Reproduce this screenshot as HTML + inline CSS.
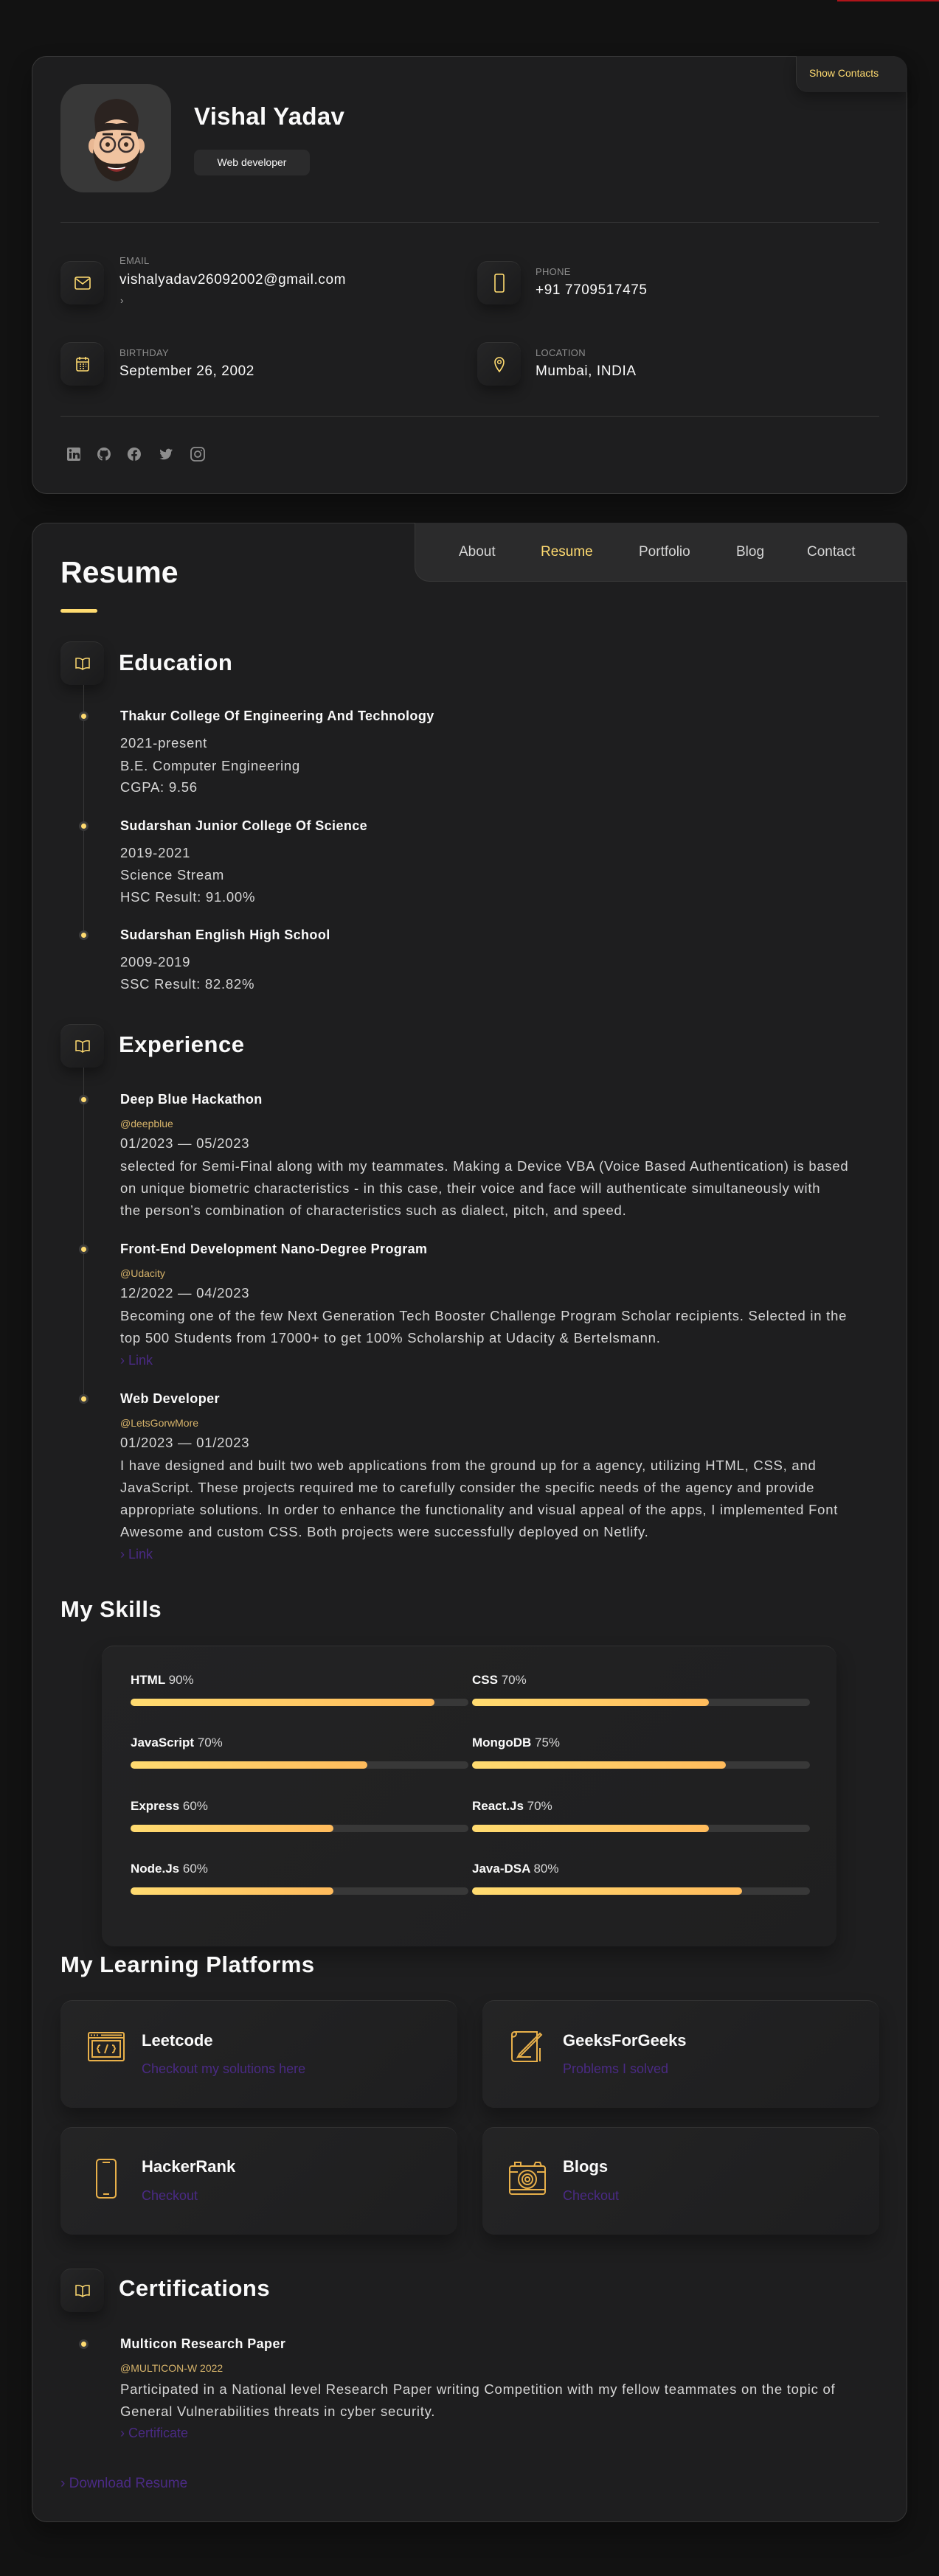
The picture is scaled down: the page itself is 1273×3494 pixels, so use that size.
<!DOCTYPE html>
<html><head><meta charset="utf-8">
<style>
*{margin:0;padding:0;box-sizing:border-box}
body{width:1273px;height:3494px;background:#121212;font-family:"Liberation Sans",sans-serif;color:#fafafa;position:relative;overflow:hidden}
.a{position:absolute;white-space:nowrap}
.card{position:absolute;left:43px;width:1187px;background:#1e1e1f;border:1px solid #383838;border-radius:20px;box-shadow:0 16px 30px rgba(0,0,0,.35)}
.ibox{position:absolute;width:59px;height:59px;border-radius:14px;background:linear-gradient(135deg,#262627,#1a1a1b);box-shadow:0 8px 16px rgba(0,0,0,.35);border-top:1px solid #333;display:flex;align-items:center;justify-content:center}
.lbl{font-size:13px;color:#8d8d8d;letter-spacing:.3px}
.val{font-size:19px;color:#fafafa;letter-spacing:.6px}
.sep{position:absolute;left:82px;width:1110px;height:1px;background:#383838}
.h2{font-size:31px;font-weight:bold;letter-spacing:.5px}
.dot{position:absolute;left:107px;width:13px;height:13px;border-radius:50%;background:#3a3a3b}
.dot:after{content:"";position:absolute;left:3px;top:3px;width:7px;height:7px;border-radius:50%;background:#ffdb70}
.vline{position:absolute;left:113px;width:1px;background:#383838}
.t{font-size:18px;font-weight:bold;letter-spacing:.4px}
.y{color:#e0bb6c}
.p{font-size:18.5px;color:#d6d6d6;line-height:30px;letter-spacing:.75px}
.sm{font-size:14px;color:#d6b36a}
.lnk{font-size:18px;color:#4a2a84}
.sk{font-size:17px;font-weight:bold}
.sk span{font-weight:normal;color:#d6d6d6}
.track{position:absolute;height:10px;border-radius:5px;background:#383838;width:458px}
.fill{height:10px;border-radius:5px;background:linear-gradient(90deg,#ffdb70,#ffbb5c)}
.pc{position:absolute;width:538px;height:146px;border-radius:16px;background:linear-gradient(135deg,#242425,#1e1e1f);border-top:1px solid #333;box-shadow:0 14px 24px rgba(0,0,0,.3)}
.pt{font-size:22px;font-weight:bold}
.ps{font-size:18px;color:#4a2a84}
</style></head><body>
<div class="a" style="left:1135px;top:0;width:138px;height:2px;background:#b0141a"></div>

<!-- CARD 1 -->
<div class="card" style="top:76px;height:594px"></div>
<div class="a" style="left:1079px;top:76px;width:151px;height:49px;background:#232324;border-radius:0 20px 0 16px;border-left:1px solid #333;box-shadow:0 8px 16px rgba(0,0,0,.3)"></div>
<div class="a" style="left:1097px;top:91px;font-size:14px;color:#ffdb70">Show Contacts</div>

<div class="a" style="left:82px;top:114px;width:150px;height:147px;border-radius:32px;background:#383838;overflow:hidden">
<svg width="150" height="147" viewBox="0 0 150 147">
<path d="M46 48 Q48 22 76 20 Q104 22 106 50 L104 70 L48 70Z" fill="#2b2320"/>
<ellipse cx="44" cy="84" rx="6" ry="10" fill="#e9b894"/><ellipse cx="108" cy="84" rx="6" ry="10" fill="#e9b894"/>
<ellipse cx="76" cy="86" rx="31" ry="38" fill="#f0c3a0"/>
<path d="M44 88 Q46 128 76 132 Q106 128 108 88 Q100 110 76 108 Q52 110 44 88Z" fill="#2a211c"/>
<path d="M62 112 Q76 126 90 112 Q76 116 62 112Z" fill="#8a2b2b"/>
<path d="M64 112 Q76 116 88 112 L87 114 Q76 117 65 114Z" fill="#fff"/>
<path d="M48 60 Q56 50 76 54 Q96 50 104 60 L104 66 Q76 58 48 66Z" fill="#2b2320"/>
<circle cx="64" cy="82" r="10" fill="none" stroke="#3a3030" stroke-width="2.5"/><circle cx="89" cy="82" r="10" fill="none" stroke="#3a3030" stroke-width="2.5"/>
<circle cx="64" cy="82" r="3" fill="#3a2a20"/><circle cx="89" cy="82" r="3" fill="#3a2a20"/>
<path d="M57 68 L71 68 M82 68 L96 68" stroke="#2b2320" stroke-width="3"/>
</svg></div>
<div class="a" style="left:263px;top:139px;font-size:33px;font-weight:bold;letter-spacing:.3px">Vishal Yadav</div>
<div class="a" style="left:263px;top:203px;width:157px;height:35px;border-radius:8px;background:#2b2b2c;font-size:14px;line-height:35px;text-align:center">Web developer</div>
<div class="sep" style="top:301px"></div>

<div class="ibox" style="left:82px;top:354px"><svg width="22" height="18" viewBox="0 0 22 18"><rect x="1" y="1" width="20" height="16" rx="2" fill="none" stroke="#ffdb70" stroke-width="1.6"/><path d="M2 3 L11 10 L20 3" fill="none" stroke="#ffdb70" stroke-width="1.6"/></svg></div>
<div class="a lbl" style="left:162px;top:346px">EMAIL</div>
<div class="a val" style="left:162px;top:369px">vishalyadav26092002@gmail.com</div>
<div class="a" style="left:163px;top:400px;font-size:13px;color:#aaa">›</div>

<div class="ibox" style="left:647px;top:354px"><svg width="16" height="26" viewBox="0 0 16 26"><rect x="2" y="1" width="12" height="24" rx="2" fill="none" stroke="#ffdb70" stroke-width="1.6"/></svg></div>
<div class="a lbl" style="left:726px;top:361px">PHONE</div>
<div class="a val" style="left:726px;top:383px">+91 7709517475</div>

<div class="ibox" style="left:82px;top:464px"><svg width="20" height="22" viewBox="0 0 20 22"><rect x="2" y="3" width="16" height="17" rx="2" fill="none" stroke="#ffdb70" stroke-width="1.6"/><path d="M2 8H18M6 1V5M14 1V5M6 11h2M10 11h2M14 11h1M6 14h2M10 14h2M14 14h1M6 17h2M10 17h2" stroke="#ffdb70" stroke-width="1.5"/></svg></div>
<div class="a lbl" style="left:162px;top:471px">BIRTHDAY</div>
<div class="a val" style="left:162px;top:493px">September 26, 2002</div>

<div class="ibox" style="left:647px;top:464px"><svg width="16" height="22" viewBox="0 0 16 22"><path d="M8 21 C3 14 2 11 2 8 A6 6 0 0 1 14 8 C14 11 13 14 8 21Z" fill="none" stroke="#ffdb70" stroke-width="1.6"/><circle cx="8" cy="8" r="2.3" fill="none" stroke="#ffdb70" stroke-width="1.5"/></svg></div>
<div class="a lbl" style="left:726px;top:471px">LOCATION</div>
<div class="a val" style="left:726px;top:493px">Mumbai, INDIA</div>
<div class="sep" style="top:564px"></div>

<svg class="a" style="left:91px;top:606px" width="190" height="22" viewBox="0 0 190 22" fill="#8d8d8d">
<rect x="0" y="1" width="18" height="18" rx="2"/><rect x="3" y="8" width="3" height="8" fill="#1e1e1f"/><circle cx="4.5" cy="5" r="1.7" fill="#1e1e1f"/><path d="M8 8h3v1.5c1-2 6-2 6 2V16h-3v-4c0-2-3-2-3 0v4H8z" fill="#1e1e1f"/>
<path d="M50 1a9 9 0 0 0-3 17.5c.5 0 .6-.2.6-.5v-2c-2.5.5-3-1-3-1-.4-1-1-1.3-1-1.3-.8-.6 0-.6 0-.6 1 0 1.4 1 1.4 1 .8 1.4 2.2 1 2.7.8 0-.6.3-1 .6-1.2-2-.2-4-1-4-4.4 0-1 .3-1.8.9-2.4 0-.3-.4-1.1.1-2.3 0 0 .8-.2 2.5.9a8 8 0 0 1 4.4 0c1.7-1.1 2.5-.9 2.5-.9.5 1.2.2 2 .1 2.3.6.6.9 1.4.9 2.4 0 3.4-2 4.2-4 4.4.3.3.6.8.6 1.6V18c0 .3.2.5.6.5A9 9 0 0 0 50 1z"/>
<path d="M91 1a9 9 0 0 0-1.5 17.9V12.6h-2.3V10h2.3V8c0-2.3 1.4-3.5 3.4-3.5 1 0 2 .2 2 .2v2.2h-1.1c-1.1 0-1.5.7-1.5 1.4V10h2.5l-.4 2.6h-2.1v6.3A9 9 0 0 0 91 1z"/>
<path d="M143 4.5c-.7.3-1.4.5-2.1.6.8-.5 1.3-1.2 1.6-2-.7.4-1.5.7-2.3.9a3.6 3.6 0 0 0-6.2 3.3c-3-.2-5.7-1.6-7.5-3.8-1 1.7-.5 3.8 1.1 4.8-.6 0-1.1-.2-1.6-.4 0 1.8 1.2 3.3 2.9 3.6-.5.2-1.1.2-1.6.1.5 1.5 1.8 2.5 3.4 2.5-1.5 1.2-3.4 1.8-5.3 1.6 1.6 1 3.5 1.6 5.5 1.6 6.7 0 10.3-5.6 10.1-10.6.7-.5 1.3-1.1 1.9-1.8z"/>
<rect x="168" y="1" width="18" height="18" rx="5" fill="none" stroke="#8d8d8d" stroke-width="1.8"/><circle cx="177" cy="10" r="4" fill="none" stroke="#8d8d8d" stroke-width="1.8"/><circle cx="182" cy="5" r="1"/>
</svg>

<!-- CARD 2 -->
<div class="card" style="top:709px;height:2712px"></div>
<div class="a" style="left:562px;top:709px;width:668px;height:80px;background:#2b2b2c;border-radius:0 20px 0 20px;border-left:1px solid #383838;border-bottom:1px solid #383838"></div>
<div class="a" style="left:622px;top:738px;font-size:19px;color:#d6d6d6">About</div>
<div class="a" style="left:733px;top:738px;font-size:19px;color:#ffdb70">Resume</div>
<div class="a" style="left:866px;top:738px;font-size:19px;color:#d6d6d6">Portfolio</div>
<div class="a" style="left:998px;top:738px;font-size:19px;color:#d6d6d6">Blog</div>
<div class="a" style="left:1094px;top:738px;font-size:19px;color:#d6d6d6">Contact</div>

<div class="a" style="left:82px;top:753px;font-size:41px;font-weight:bold">Resume</div>
<div class="a" style="left:82px;top:826px;width:50px;height:5px;border-radius:3px;background:#ffdb70"></div>

<!-- Education -->
<div class="ibox" style="left:82px;top:870px"><svg width="20" height="18" viewBox="0 0 20 18"><path d="M10 4 Q6 1 1 2 V15 Q6 14 10 17 Q14 14 19 15 V2 Q14 1 10 4Z M10 4V17" fill="none" stroke="#ffdb70" stroke-width="1.5"/></svg></div>
<div class="a h2" style="left:161px;top:881px">Education</div>
<div class="vline" style="top:929px;height:340px"></div>
<div class="dot" style="top:965px"></div>
<div class="a t" style="left:163px;top:961px">Thakur College Of Engineering And Technology</div>
<div class="a p y" style="left:163px;top:993px">2021-present</div>
<div class="a p" style="left:163px;top:1024px">B.E. Computer Engineering</div>
<div class="a p" style="left:163px;top:1053px">CGPA: 9.56</div>
<div class="dot" style="top:1114px"></div>
<div class="a t" style="left:163px;top:1110px">Sudarshan Junior College Of Science</div>
<div class="a p y" style="left:163px;top:1142px">2019-2021</div>
<div class="a p" style="left:163px;top:1172px">Science Stream</div>
<div class="a p" style="left:163px;top:1202px">HSC Result: 91.00%</div>
<div class="dot" style="top:1262px"></div>
<div class="a t" style="left:163px;top:1258px">Sudarshan English High School</div>
<div class="a p y" style="left:163px;top:1290px">2009-2019</div>
<div class="a p" style="left:163px;top:1320px">SSC Result: 82.82%</div>

<!-- Experience -->
<div class="ibox" style="left:82px;top:1389px"><svg width="20" height="18" viewBox="0 0 20 18"><path d="M10 4 Q6 1 1 2 V15 Q6 14 10 17 Q14 14 19 15 V2 Q14 1 10 4Z M10 4V17" fill="none" stroke="#ffdb70" stroke-width="1.5"/></svg></div>
<div class="a h2" style="left:161px;top:1399px">Experience</div>
<div class="vline" style="top:1448px;height:450px"></div>
<div class="dot" style="top:1485px"></div>
<div class="a t" style="left:163px;top:1481px">Deep Blue Hackathon</div>
<div class="a sm" style="left:163px;top:1516px">@deepblue</div>
<div class="a p y" style="left:163px;top:1536px">01/2023 — 05/2023</div>
<div class="a p" style="left:163px;top:1567px">selected for Semi-Final along with my teammates. Making a Device VBA (Voice Based Authentication) is based<br>on unique biometric characteristics - in this case, their voice and face will authenticate simultaneously with<br>the person’s combination of characteristics such as dialect, pitch, and speed.</div>

<div class="dot" style="top:1688px"></div>
<div class="a t" style="left:163px;top:1684px">Front-End Development Nano-Degree Program</div>
<div class="a sm" style="left:163px;top:1719px">@Udacity</div>
<div class="a p y" style="left:163px;top:1739px">12/2022 — 04/2023</div>
<div class="a p" style="left:163px;top:1770px">Becoming one of the few Next Generation Tech Booster Challenge Program Scholar recipients. Selected in the<br>top 500 Students from 17000+ to get 100% Scholarship at Udacity &amp; Bertelsmann.</div>
<div class="a lnk" style="left:163px;top:1835px">› Link</div>

<div class="dot" style="top:1891px"></div>
<div class="a t" style="left:163px;top:1887px">Web Developer</div>
<div class="a sm" style="left:163px;top:1922px">@LetsGorwMore</div>
<div class="a p y" style="left:163px;top:1942px">01/2023 — 01/2023</div>
<div class="a p" style="left:163px;top:1973px">I have designed and built two web applications from the ground up for a agency, utilizing HTML, CSS, and<br>JavaScript. These projects required me to carefully consider the specific needs of the agency and provide<br>appropriate solutions. In order to enhance the functionality and visual appeal of the apps, I implemented Font<br>Awesome and custom CSS. Both projects were successfully deployed on Netlify.</div>
<div class="a lnk" style="left:163px;top:2098px">› Link</div>

<!-- Skills -->
<div class="a h2" style="left:82px;top:2165px">My Skills</div>
<div class="a" style="left:138px;top:2232px;width:996px;height:408px;border-radius:16px;background:linear-gradient(135deg,#232324,#1f1f20);border-top:1px solid #333;box-shadow:0 14px 26px rgba(0,0,0,.3)"></div>
<div class="a sk" style="left:177px;top:2269px">HTML <span>90%</span></div>
<div class="track" style="left:177px;top:2304px"><div class="fill" style="width:90%"></div></div>
<div class="a sk" style="left:640px;top:2269px">CSS <span>70%</span></div>
<div class="track" style="left:640px;top:2304px"><div class="fill" style="width:70%"></div></div>
<div class="a sk" style="left:177px;top:2354px">JavaScript <span>70%</span></div>
<div class="track" style="left:177px;top:2389px"><div class="fill" style="width:70%"></div></div>
<div class="a sk" style="left:640px;top:2354px">MongoDB <span>75%</span></div>
<div class="track" style="left:640px;top:2389px"><div class="fill" style="width:75%"></div></div>
<div class="a sk" style="left:177px;top:2440px">Express <span>60%</span></div>
<div class="track" style="left:177px;top:2475px"><div class="fill" style="width:60%"></div></div>
<div class="a sk" style="left:640px;top:2440px">React.Js <span>70%</span></div>
<div class="track" style="left:640px;top:2475px"><div class="fill" style="width:70%"></div></div>
<div class="a sk" style="left:177px;top:2525px">Node.Js <span>60%</span></div>
<div class="track" style="left:177px;top:2560px"><div class="fill" style="width:60%"></div></div>
<div class="a sk" style="left:640px;top:2525px">Java-DSA <span>80%</span></div>
<div class="track" style="left:640px;top:2560px"><div class="fill" style="width:80%"></div></div>

<!-- Platforms -->
<div class="a h2" style="left:82px;top:2647px">My Learning Platforms</div>
<div class="pc" style="left:82px;top:2713px"></div>
<div class="pc" style="left:654px;top:2713px"></div>
<div class="pc" style="left:82px;top:2885px"></div>
<div class="pc" style="left:654px;top:2885px"></div>

<svg class="a" style="left:119px;top:2756px" width="50" height="40" viewBox="0 0 50 40" fill="none" stroke="#e8b04a" stroke-width="2"><rect x="1" y="1" width="48" height="38" rx="2"/><path d="M1 8H49M4 4.5h2M8 4.5h2M12 4.5h2M18 4.5H46"/><rect x="6" y="12" width="38" height="22"/><path d="M17 18 Q14 18 14 21 Q12 23 14 24 Q14 28 17 28M33 18 Q36 18 36 21 Q38 23 36 24 Q36 28 33 28M27 17 L23 29"/></svg>
<div class="a pt" style="left:192px;top:2755px">Leetcode</div>
<div class="a ps" style="left:192px;top:2796px">Checkout my solutions here</div>

<svg class="a" style="left:690px;top:2752px" width="50" height="48" viewBox="0 0 50 48" fill="none" stroke="#e8b04a" stroke-width="2"><path d="M4 8 Q4 4 8 4 H38 V44 H8 Q4 44 4 40Z M8 4 Q12 6 8 10 Q4 12 4 8"/><path d="M14 34 L36 12 L42 6 L44 8 L38 14 L16 36 L12 38Z M12 38 H30"/><path d="M38 30 V44 M42 26 V44"/></svg>
<div class="a pt" style="left:763px;top:2755px">GeeksForGeeks</div>
<div class="a ps" style="left:763px;top:2796px">Problems I solved</div>

<svg class="a" style="left:129px;top:2928px" width="30" height="54" viewBox="0 0 30 54" fill="none" stroke="#e8b04a" stroke-width="2"><rect x="2" y="1" width="26" height="52" rx="4"/><path d="M10 5H20M11 48H19"/></svg>
<div class="a pt" style="left:192px;top:2926px">HackerRank</div>
<div class="a ps" style="left:192px;top:2968px">Checkout</div>

<svg class="a" style="left:690px;top:2930px" width="50" height="48" viewBox="0 0 50 48" fill="none" stroke="#e8b04a" stroke-width="2"><rect x="1" y="8" width="48" height="38" rx="3"/><path d="M8 8V3H16V8M34 8 L36 3H42L44 8M1 16H12M38 16H49M1 40H49"/><circle cx="25" cy="26" r="12"/><circle cx="25" cy="26" r="7"/><circle cx="25" cy="26" r="3"/></svg>
<div class="a pt" style="left:763px;top:2926px">Blogs</div>
<div class="a ps" style="left:763px;top:2968px">Checkout</div>

<!-- Certifications -->
<div class="ibox" style="left:82px;top:3077px"><svg width="20" height="18" viewBox="0 0 20 18"><path d="M10 4 Q6 1 1 2 V15 Q6 14 10 17 Q14 14 19 15 V2 Q14 1 10 4Z M10 4V17" fill="none" stroke="#ffdb70" stroke-width="1.5"/></svg></div>
<div class="a h2" style="left:161px;top:3086px">Certifications</div>
<div class="dot" style="top:3173px"></div>
<div class="a t" style="left:163px;top:3169px">Multicon Research Paper</div>
<div class="a sm" style="left:163px;top:3204px">@MULTICON-W 2022</div>
<div class="a p" style="left:163px;top:3226px">Participated in a National level Research Paper writing Competition with my fellow teammates on the topic of<br>General Vulnerabilities threats in cyber security.</div>
<div class="a lnk" style="left:163px;top:3290px">› Certificate</div>

<div class="a lnk" style="left:82px;top:3358px;font-size:19px">› Download Resume</div>
</body></html>
